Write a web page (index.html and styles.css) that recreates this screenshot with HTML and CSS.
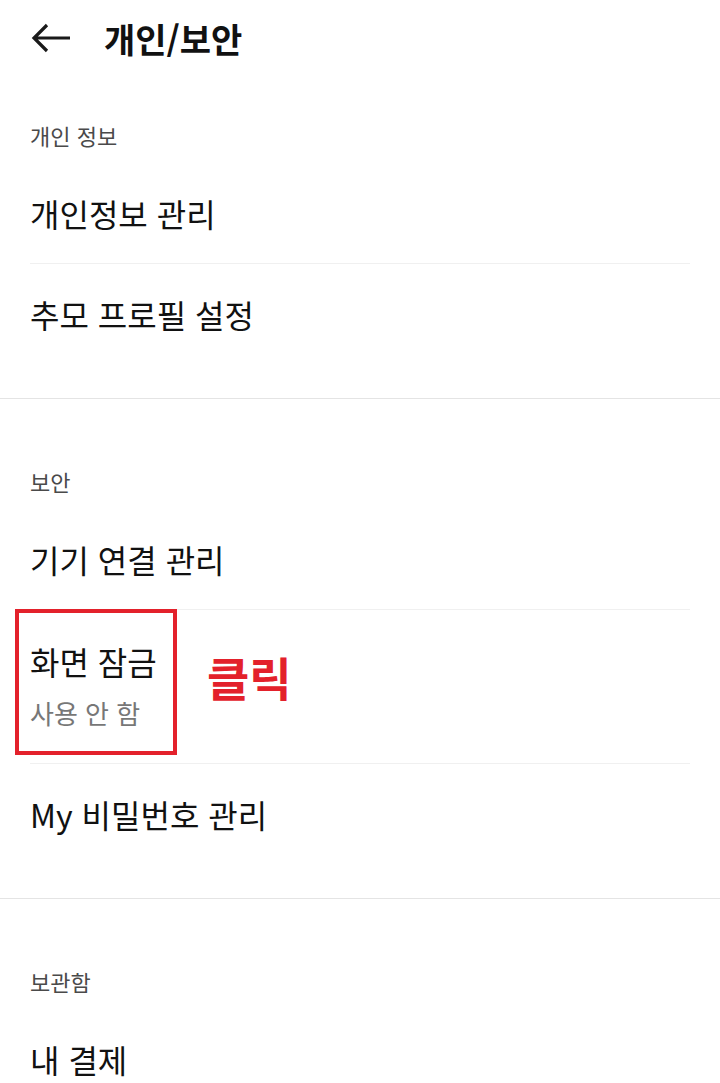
FILE: index.html
```html
<!DOCTYPE html>
<html lang="ko">
<head>
<meta charset="utf-8">
<title>개인/보안</title>
<link rel="stylesheet" href="styles.css">
</head>
<body>
<header class="topbar">
  <svg class="back" width="40" height="32" viewBox="0 0 40 32" aria-hidden="true">
    <path d="M3 16 H39 M16 3 L3 16 L16 29" fill="none" stroke="#1a1a1a" stroke-width="3.2" stroke-linecap="butt" stroke-linejoin="miter"/>
  </svg>
  <h1 class="title">개인/보안</h1>
</header>

<section class="section first">
  <div class="label">개인 정보</div>
  <div class="row">개인정보 관리</div>
  <div class="row last">추모 프로필 설정</div>
</section>

<section class="section">
  <div class="label">보안</div>
  <div class="row">기기 연결 관리</div>
  <div class="row double">
    <div class="row-title">화면 잠금</div>
    <div class="row-sub">사용 안 함</div>
    <span class="highlight"></span>
    <span class="click">클릭</span>
  </div>
  <div class="row last">My 비밀번호 관리</div>
</section>

<section class="section">
  <div class="label">보관함</div>
  <div class="row">내 결제</div>
</section>
</body>
</html>
```

FILE: styles.css
```css
html, body {
  margin: 0;
  padding: 0;
  background: #ffffff;
}
body {
  font-family: "Noto Sans CJK KR", "Noto Sans", sans-serif;
  color: #111111;
  width: 720px;
  overflow: hidden;
}
.topbar {
  height: 78px;
  display: flex;
  align-items: center;
  padding-left: 31px;
  gap: 33px;
  box-sizing: border-box;
}
.back {
  display: block;
  margin-top: -2px;
}
.title {
  margin: 0;
  font-size: 34px;
  font-weight: 700;
  line-height: 40px;
  color: #111111;
  margin-top: -1px;
}
.section {
  border-top: 1px solid #e4e4e4;
}
.section.first {
  border-top: none;
}
.label {
  padding: 54px 30px 0;
  height: 56px;
  line-height: 56px;
  font-size: 22px;
  color: #4a4a4a;
}
.section.first .label {
  padding-top: 29px;
}
.row {
  position: relative;
  margin: 0 30px;
  height: 100px;
  display: flex;
  flex-direction: column;
  justify-content: center;
  font-size: 32px;
  line-height: 40px;
  border-bottom: 1px solid #f0f0f0;
}
.row.last {
  border-bottom: none;
  padding-bottom: 34px;
}
.row.double {
  height: 153px;
  gap: 12px;
}
.row-title {
  font-size: 32px;
  line-height: 40px;
}
.row-sub {
  font-size: 26px;
  line-height: 40px;
  color: #777777;
}
.highlight {
  position: absolute;
  left: -15px;
  top: -1px;
  width: 162px;
  height: 146px;
  box-sizing: border-box;
  border: 4px solid #e3212b;
}
.click {
  position: absolute;
  left: 177px;
  top: 39px;
  font-size: 46px;
  font-weight: 700;
  line-height: 54px;
  color: #e3212b;
}
```
